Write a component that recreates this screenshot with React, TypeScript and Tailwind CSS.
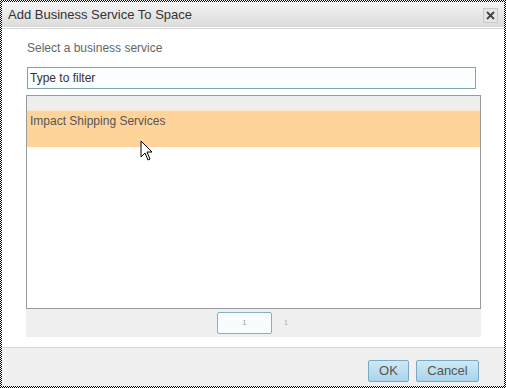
export default function App() {
  return (
    <div className="w-[506px] h-[388px] p-[2px] bg-[repeating-conic-gradient(#000_0_25%,#fff_0_50%)] bg-[length:2px_2px] font-['Liberation_Sans',Arial,sans-serif]">
      <div className="relative w-full h-full bg-white flex flex-col">
        {/* title bar */}
        <div className="h-[25px] shrink-0 flex items-center justify-between pl-[6px] pr-[6px] bg-gradient-to-b from-[#f3f3f3] to-[#dcdcdc]">
          <span className="text-[13px] text-[#333]">Add Business Service To Space</span>
          <button className="w-[15px] h-[15px] mt-[1px] flex items-center justify-center border border-[#c8c8c8] bg-[#e6e6e6]">
            <svg width="9" height="9" viewBox="0 0 9 9">
              <path d="M1 1L8 8M8 1L1 8" stroke="#444" strokeWidth="1.8" />
            </svg>
          </button>
        </div>
        <div className="h-px bg-white" />
        <div className="h-px bg-[#d6d6d6]" />

        {/* body */}
        <div className="flex-1 flex flex-col pl-[24px] pt-[12px]">
          <div className="ml-px text-[12px] leading-[14px] text-[#666]">Select a business service</div>
          <div className="ml-px mt-[12px] w-[449px] h-[22px] border border-[#7fa6a6] bg-[#fbfeff] flex items-center px-[2px]">
            <span className="text-[12px] leading-[14px] text-[#333]">Type to filter</span>
          </div>
          <div className="mt-[6px] w-[455px] h-[214px] border border-[#9a9a9a] flex flex-col">
            <div className="h-[14px] bg-[#eeeeee]" />
            <div className="h-px bg-[#fbe6cc]" />
            <div className="h-[36px] bg-[#ffd49b] px-[3px] pt-[3px] text-[12px] leading-[14px] text-[#555]">
              Impact Shipping Services
            </div>
          </div>
          <div className="w-[455px] h-[28px] bg-[#f0f0f0] flex items-center">
            <div className="ml-[191px] w-[55px] h-[22px] border border-[#86b0bd] rounded-[2px] bg-[#f7fdff] flex items-center justify-center">
              <span className="text-[7px] text-[#999]">1</span>
            </div>
            <span className="ml-[12px] text-[7px] text-[#b0a890]">1</span>
          </div>
        </div>

        {/* footer */}
        <div className="h-px bg-[#d8d8d8]" />
        <div className="h-[38px] shrink-0 bg-[#f0f0f0] flex justify-end items-start pt-[12px] pr-[25px] gap-[7px]">
          <button className="w-[41px] h-[22px] border border-[#79a9c2] rounded-[2px] bg-gradient-to-b from-[#cfe9f5] to-[#a9d4ea] text-[13px] text-[#555]">
            OK
          </button>
          <button className="w-[63px] h-[22px] border border-[#79a9c2] rounded-[2px] bg-gradient-to-b from-[#cfe9f5] to-[#a9d4ea] text-[13px] text-[#555]">
            Cancel
          </button>
        </div>

        {/* mouse pointer */}
        <svg className="absolute left-[138px] top-[138px]" width="14" height="22" viewBox="0 0 14 22">
          <path d="M1 1L1 17L5 13L8 20L10 19L7 12L12 12Z" fill="#fff" stroke="#000" strokeWidth="1" strokeLinejoin="miter" />
        </svg>
      </div>
    </div>
  );
}
